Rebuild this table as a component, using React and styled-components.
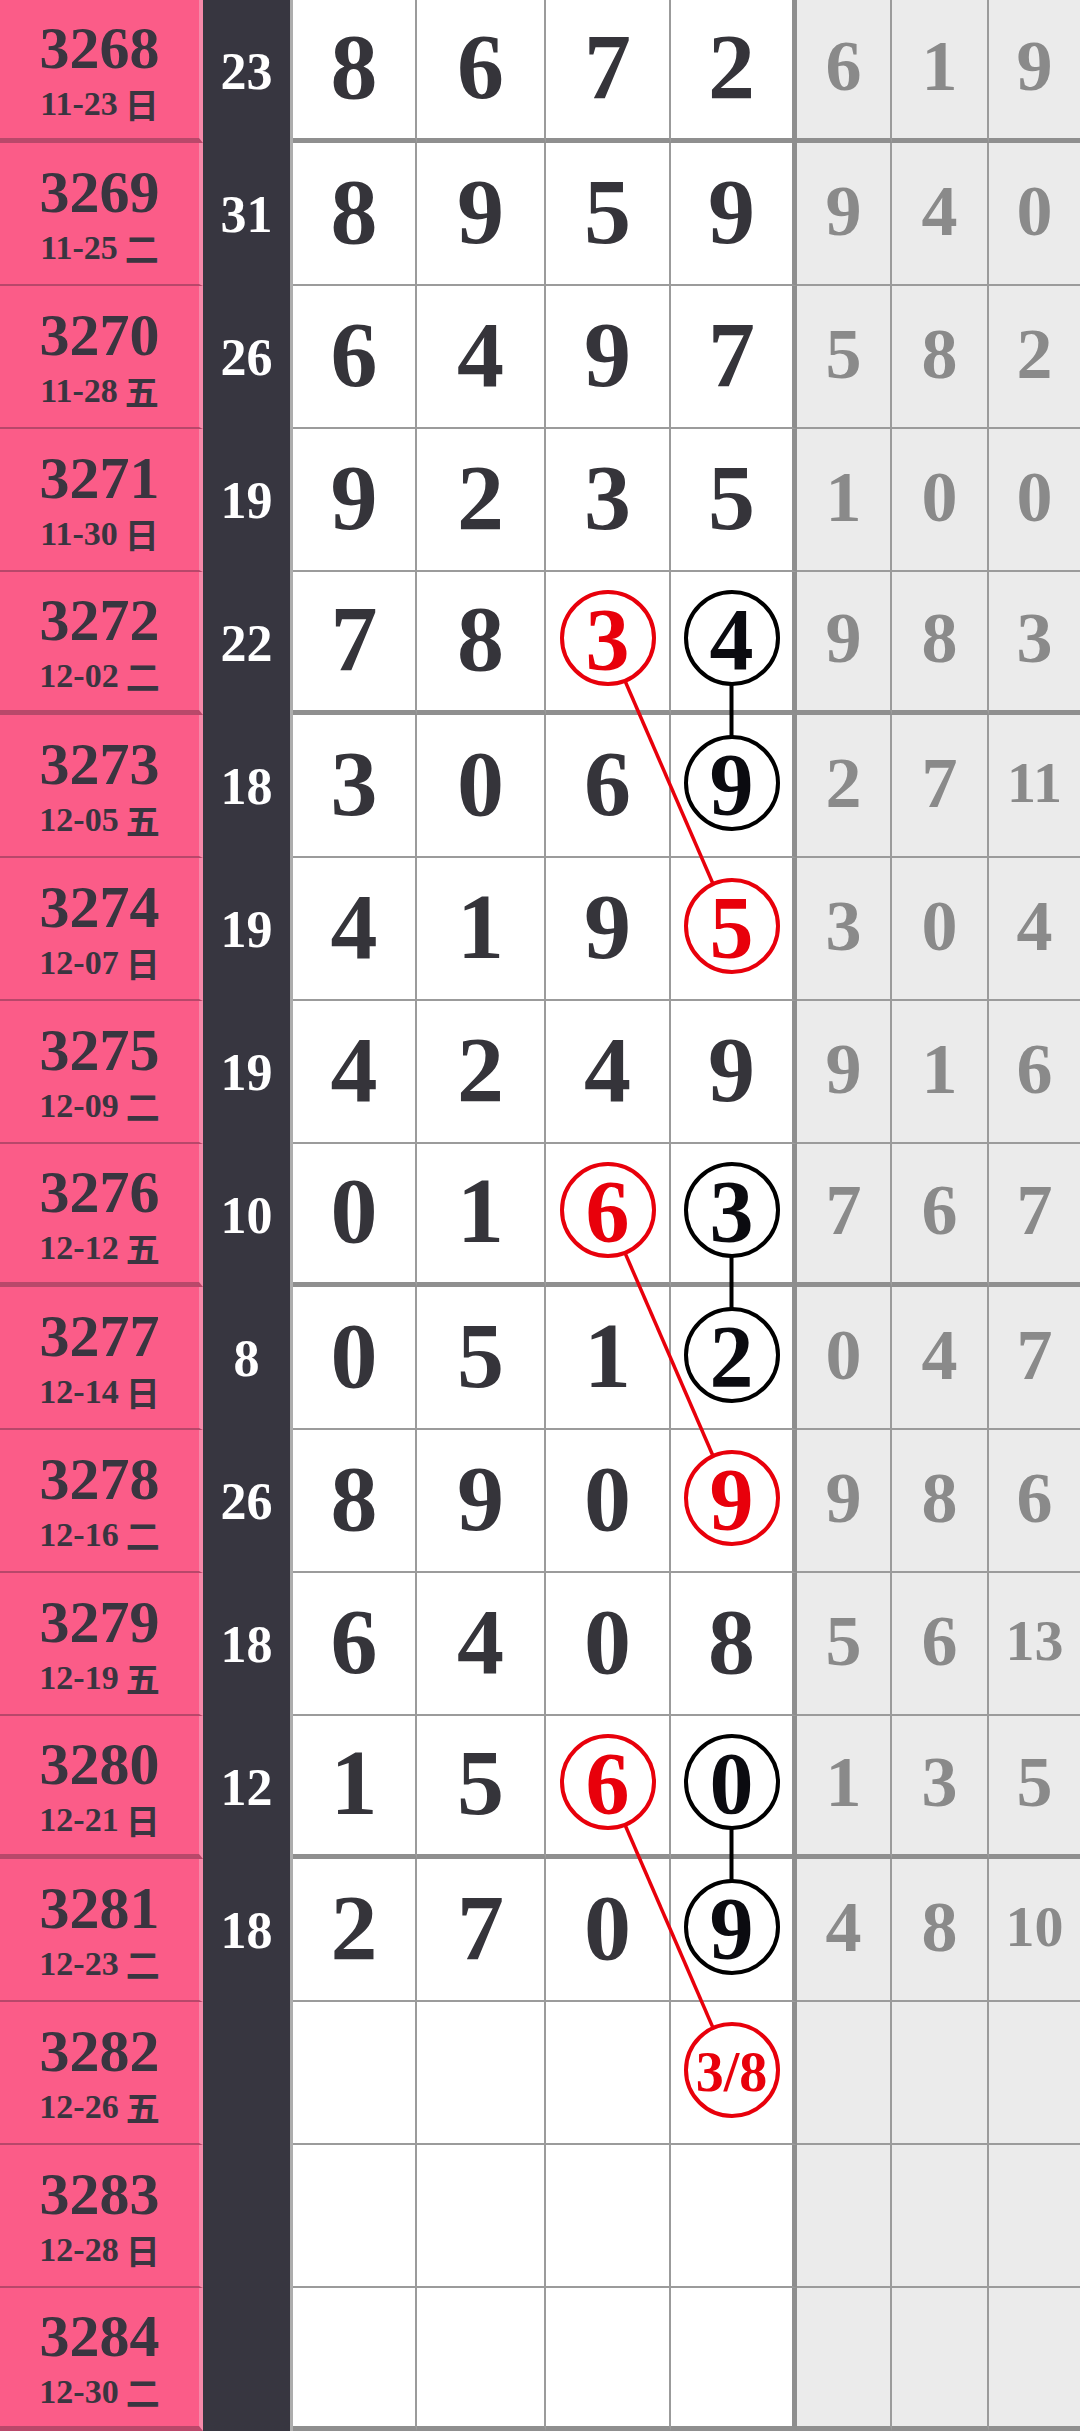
import React from 'react';
import styled, { createGlobalStyle } from 'styled-components';

const GlobalStyle = createGlobalStyle`
  html, body {
    margin: 0;
    padding: 0;
    background: #fff;
  }
  body {
    font-family: "Liberation Serif", "Noto Sans CJK SC", serif;
  }
`;

const ROW_H = 143;
const COLS = [203, 90, 124, 129, 125, 126, 95, 97, 91];

// x centre of the 3rd and 4th draw column (content box, without right border)
const X3 = 203 + 90 + 124 + 129 + (125 - 2) / 2;
const X4 = 203 + 90 + 124 + 129 + 125 + (126 - 5) / 2;
const cy = (i) => i * ROW_H + ROW_H / 2 - 3;

const rows = [
  { no: '3268', date: '11-23', day: '日', sum: '23', nums: ['8', '6', '7', '2'], rest: ['6', '1', '9'] },
  { no: '3269', date: '11-25', day: '二', sum: '31', nums: ['8', '9', '5', '9'], rest: ['9', '4', '0'] },
  { no: '3270', date: '11-28', day: '五', sum: '26', nums: ['6', '4', '9', '7'], rest: ['5', '8', '2'] },
  { no: '3271', date: '11-30', day: '日', sum: '19', nums: ['9', '2', '3', '5'], rest: ['1', '0', '0'] },
  { no: '3272', date: '12-02', day: '二', sum: '22', nums: ['7', '8', '3', '4'], rest: ['9', '8', '3'], ring: { 2: 'red', 3: 'black' } },
  { no: '3273', date: '12-05', day: '五', sum: '18', nums: ['3', '0', '6', '9'], rest: ['2', '7', '11'], ring: { 3: 'black' } },
  { no: '3274', date: '12-07', day: '日', sum: '19', nums: ['4', '1', '9', '5'], rest: ['3', '0', '4'], ring: { 3: 'red' } },
  { no: '3275', date: '12-09', day: '二', sum: '19', nums: ['4', '2', '4', '9'], rest: ['9', '1', '6'] },
  { no: '3276', date: '12-12', day: '五', sum: '10', nums: ['0', '1', '6', '3'], rest: ['7', '6', '7'], ring: { 2: 'red', 3: 'black' } },
  { no: '3277', date: '12-14', day: '日', sum: '8', nums: ['0', '5', '1', '2'], rest: ['0', '4', '7'], ring: { 3: 'black' } },
  { no: '3278', date: '12-16', day: '二', sum: '26', nums: ['8', '9', '0', '9'], rest: ['9', '8', '6'], ring: { 3: 'red' } },
  { no: '3279', date: '12-19', day: '五', sum: '18', nums: ['6', '4', '0', '8'], rest: ['5', '6', '13'] },
  { no: '3280', date: '12-21', day: '日', sum: '12', nums: ['1', '5', '6', '0'], rest: ['1', '3', '5'], ring: { 2: 'red', 3: 'black' } },
  { no: '3281', date: '12-23', day: '二', sum: '18', nums: ['2', '7', '0', '9'], rest: ['4', '8', '10'], ring: { 3: 'black' } },
  { no: '3282', date: '12-26', day: '五', sum: '', nums: ['', '', '', '3/8'], rest: ['', '', ''], ring: { 3: 'red' } },
  { no: '3283', date: '12-28', day: '日', sum: '', nums: ['', '', '', ''], rest: ['', '', ''] },
  { no: '3284', date: '12-30', day: '二', sum: '', nums: ['', '', '', ''], rest: ['', '', ''] },
];

// red diagonal links and black vertical links, [fromRow, fromX, toRow, toX]
const redLinks = [[4, X3, 6, X4], [8, X3, 10, X4], [12, X3, 14, X4]];
const blackLinks = [[4, X4, 5, X4], [8, X4, 9, X4], [12, X4, 13, X4]];

const Board = styled.div`
  position: relative;
  display: grid;
  grid-template-columns: ${COLS.map((c) => c + 'px').join(' ')};
  grid-auto-rows: ${ROW_H}px;
  width: 1080px;
  overflow: hidden;
`;

const IssueCell = styled.div`
  box-sizing: border-box;
  display: flex;
  flex-direction: column;
  align-items: center;
  justify-content: center;
  gap: 9px;
  background: #fb5c88;
  color: #3a3540;
  font-weight: bold;
  border-right: 4px solid #f68aaa;
  border-bottom: ${(p) => (p.$thick ? '5px solid #b9486a' : '2px solid #b8476a')};
`;

const IssueNo = styled.span`
  font-size: 60px;
  line-height: 60px;
`;

const IssueDate = styled.span`
  font-size: 34px;
  line-height: 34px;
  display: flex;
  align-items: center;
  gap: 7px;
`;

const Weekday = styled.span`
  font-family: "Noto Sans CJK SC", sans-serif;
  font-weight: 700;
  font-size: 34px;
  line-height: 34px;
`;

const SumCell = styled.div`
  box-sizing: border-box;
  display: flex;
  align-items: center;
  justify-content: center;
  background: #373640;
  color: #fff;
  font-weight: bold;
  font-size: 52px;
  border-right: 3px solid #adadad;
`;

const NumCell = styled.div`
  box-sizing: border-box;
  display: flex;
  align-items: center;
  justify-content: center;
  padding-bottom: 6px;
  background: ${(p) => (p.$grey ? '#ebebeb' : '#fff')};
  border-right: ${(p) => (p.$edge ? '5px solid #8e8e8e' : p.$end ? 'none' : '2px solid #9b9b9b')};
  border-bottom: ${(p) => (p.$thick ? '5px solid #8f8f8f' : '2px solid #9b9b9b')};
`;

const Digit = styled.span`
  font-weight: bold;
  font-size: 94px;
  line-height: 1;
  color: #35343a;
`;

const RestDigit = styled.span`
  font-weight: bold;
  font-size: ${(p) => (p.$small ? '58px' : '72px')};
  line-height: 1;
  color: #8a8a8a;
`;

const Ring = styled.span`
  position: relative;
  z-index: 2;
  box-sizing: border-box;
  width: 96px;
  height: 96px;
  border-radius: 50%;
  border: 4px solid ${(p) => (p.$tone === 'red' ? '#e8000b' : '#000')};
  background: #fff;
  display: flex;
  align-items: center;
  justify-content: center;
  color: ${(p) => (p.$tone === 'red' ? '#e8000b' : '#0b0b10')};
  font-weight: bold;
  font-size: ${(p) => (p.$long ? '56px' : '88px')};
  line-height: 1;
  padding-top: 4px;
`;

const Links = styled.svg`
  position: absolute;
  left: 0;
  top: 0;
  z-index: 1;
  pointer-events: none;
`;

function Row({ row, index }) {
  const thick = index % 4 === 0;
  return (
    <>
      <IssueCell $thick={thick}>
        <IssueNo>{row.no}</IssueNo>
        <IssueDate>
          {row.date}
          <Weekday>{row.day}</Weekday>
        </IssueDate>
      </IssueCell>
      <SumCell>{row.sum}</SumCell>
      {row.nums.map((n, i) => {
        const tone = row.ring && row.ring[i];
        return (
          <NumCell key={'n' + i} $thick={thick} $edge={i === 3}>
            {tone ? (
              <Ring $tone={tone} $long={n.length > 1}>{n}</Ring>
            ) : (
              <Digit>{n}</Digit>
            )}
          </NumCell>
        );
      })}
      {row.rest.map((n, i) => (
        <NumCell key={'r' + i} $grey $thick={thick} $end={i === 2}>
          <RestDigit $small={n.length > 1}>{n}</RestDigit>
        </NumCell>
      ))}
    </>
  );
}

export default function App() {
  const height = rows.length * ROW_H;
  return (
    <>
      <GlobalStyle />
      <Board>
        {rows.map((row, i) => (
          <Row key={row.no} row={row} index={i} />
        ))}
        <Links width="1080" height={height} viewBox={`0 0 1080 ${height}`}>
          {redLinks.map(([a, x1, b, x2], i) => (
            <line key={'r' + i} x1={x1} y1={cy(a)} x2={x2} y2={cy(b)} stroke="#e8000b" strokeWidth="3.5" />
          ))}
          {blackLinks.map(([a, x1, b, x2], i) => (
            <line key={'b' + i} x1={x1} y1={cy(a)} x2={x2} y2={cy(b)} stroke="#000" strokeWidth="4" />
          ))}
        </Links>
      </Board>
    </>
  );
}
